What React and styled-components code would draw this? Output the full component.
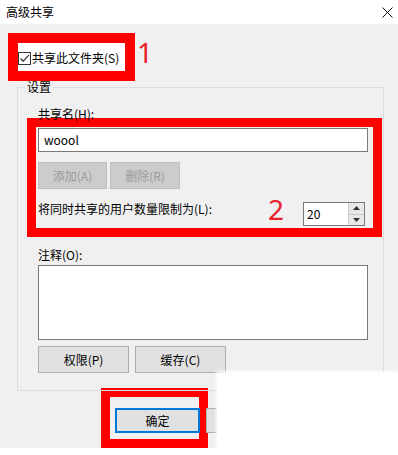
import React from 'react';
import styled, { createGlobalStyle } from 'styled-components';

const GlobalStyle = createGlobalStyle`
  body {
    margin: 0;
    background: #fff;
    font-family: "Noto Sans CJK SC", "Noto Sans", sans-serif;
    font-size: 12px;
    color: #000;
  }
`;

const Window = styled.div`
  position: relative;
  width: 398px;
  height: 455px;
  background: #fff;
  overflow: hidden;
`;

const TitleBar = styled.div`
  height: 24px;
  box-sizing: border-box;
  padding: 0 5px 0 6px;
  display: flex;
  align-items: center;
  justify-content: space-between;
  line-height: 16px;
`;

const Body = styled.div`
  position: relative;
  z-index: 0;
  height: 424px;
  box-sizing: border-box;
  padding-top: 27px;
  background: #f0f0f0;
`;

const CheckRow = styled.label`
  display: flex;
  align-items: center;
  gap: 1px;
  height: 14px;
  padding-left: 18px;
  line-height: 16px;
`;

const CheckBox = styled.span`
  width: 13px;
  height: 13px;
  box-sizing: border-box;
  border: 1px solid #333;
  background: #fff;
  display: flex;
  align-items: center;
  justify-content: center;
`;

const Group = styled.fieldset`
  margin: 14px 14px 0 17px;
  padding: 11px 15px 17px 20px;
  border: 1px solid #dcdcdc;
  min-width: 0;
`;

const Legend = styled.legend`
  padding: 0 2px;
  margin-left: -13px;
  line-height: 16px;
`;

const Label = styled.div`
  line-height: 16px;
  margin-top: ${(p) => p.$top || 0}px;
`;

const TextBox = styled.div`
  box-sizing: border-box;
  height: ${(p) => p.$height}px;
  margin-top: ${(p) => p.$top}px;
  border: 1px solid #7a7a7a;
  background: #fff;
  padding: 2px 5px;
  line-height: 18px;
  font-size: 12px;
`;

const ButtonRow = styled.div`
  display: flex;
  gap: ${(p) => p.$gap}px;
  margin-top: ${(p) => p.$top}px;
`;

const Button = styled.div`
  box-sizing: border-box;
  width: ${(p) => p.$width}px;
  height: ${(p) => p.$height || 27}px;
  display: flex;
  align-items: center;
  justify-content: center;
  border: 1px solid ${(p) => (p.$disabled ? '#bfbfbf' : p.$primary ? '#0078d7' : '#adadad')};
  background: ${(p) => (p.$disabled ? '#cccccc' : '#e1e1e1')};
  color: ${(p) => (p.$disabled ? '#9a9a9a' : '#000')};
  box-shadow: ${(p) => (p.$primary ? 'inset 0 0 0 1px #0078d7' : 'none')};
`;

const LimitRow = styled.div`
  display: flex;
  justify-content: space-between;
  align-items: flex-start;
  margin-top: 12px;
`;

const Spinner = styled.div`
  display: flex;
  width: 62px;
  height: 24px;
  margin-top: 1px;
  margin-right: 3px;
  box-sizing: border-box;
  border: 1px solid #7a7a7a;
  background: #fff;
`;

const SpinValue = styled.div`
  flex: 1;
  padding-left: 3px;
  line-height: 22px;
`;

const SpinButtons = styled.div`
  width: 15px;
  display: flex;
  flex-direction: column;
  border-left: 1px solid #c8c8c8;
`;

const SpinButton = styled.div`
  flex: 1;
  display: flex;
  align-items: center;
  justify-content: center;
  background: #e8e8e8;
  border-bottom: ${(p) => (p.$top ? '1px solid #c8c8c8' : 'none')};
`;

const Footer = styled.div`
  display: flex;
  gap: 6px;
  padding-left: 115px;
  margin-top: 17px;
`;

const Mark = styled.div`
  position: absolute;
  z-index: -1;
  box-sizing: border-box;
  left: ${(p) => p.$x}px;
  top: ${(p) => p.$y}px;
  width: ${(p) => p.$w}px;
  height: ${(p) => p.$h}px;
  border: ${(p) => p.$b}px solid #ff0000;
  background: ${(p) => p.$fill || 'transparent'};
`;

const Number = styled.div`
  position: absolute;
  z-index: 3;
  left: ${(p) => p.$x}px;
  top: ${(p) => p.$y}px;
  font-family: "Noto Sans", sans-serif;
  font-size: 28px;
  line-height: 28px;
  color: #e8202a;
`;

const Patch = styled.div`
  position: absolute;
  z-index: 2;
  left: 217px;
  top: 349px;
  right: 0;
  bottom: 0;
  background: #fff;
  box-shadow: 0 -1px 3px 1px rgba(255, 255, 255, 0.9);
`;

const Arrow = ({ up }) => (
  <svg width="7" height="4" viewBox="0 0 7 4">
    <path d={up ? 'M0 4 L3.5 0 L7 4 Z' : 'M0 0 L3.5 4 L7 0 Z'} fill="#333" />
  </svg>
);

export default function App() {
  return (
    <>
      <GlobalStyle />
      <Window>
        <TitleBar>
          <span>高级共享</span>
          <svg width="11" height="11" viewBox="0 0 11 11">
            <path d="M0.5 0.5 L10.5 10.5 M10.5 0.5 L0.5 10.5" stroke="#111" strokeWidth="1" />
          </svg>
        </TitleBar>
        <Body>
          <Mark $x={8} $y={9} $w={127} $h={48} $b={10} $fill="#fff" />
          <Number $x={137} $y={14}>1</Number>
          <Mark $x={27} $y={94} $w={355} $h={119} $b={9} />
          <Number $x={268} $y={171}>2</Number>
          <Mark $x={101} $y={364} $w={107} $h={60} $b={9} />

          <CheckRow>
            <CheckBox>
              <svg width="11" height="11" viewBox="0 0 11 11">
                <path d="M1.5 5.5 L4.2 8.2 L9.8 2.2" fill="none" stroke="#222" strokeWidth="1.1" />
              </svg>
            </CheckBox>
            共享此文件夹(S)
          </CheckRow>

          <Group>
            <Legend>设置</Legend>
            <Label>共享名(H):</Label>
            <TextBox $height={24} $top={6}>woool</TextBox>
            <ButtonRow $gap={3} $top={10}>
              <Button $width={69} $disabled>添加(A)</Button>
              <Button $width={70} $disabled>删除(R)</Button>
            </ButtonRow>
            <LimitRow>
              <Label>将同时共享的用户数量限制为(L):</Label>
              <Spinner>
                <SpinValue>20</SpinValue>
                <SpinButtons>
                  <SpinButton $top><Arrow up /></SpinButton>
                  <SpinButton><Arrow /></SpinButton>
                </SpinButtons>
              </Spinner>
            </LimitRow>
            <Label $top={21}>注释(O):</Label>
            <TextBox $height={75} $top={2} />
            <ButtonRow $gap={6} $top={6}>
              <Button $width={91}>权限(P)</Button>
              <Button $width={91}>缓存(C)</Button>
            </ButtonRow>
          </Group>

          <Footer>
            <Button $width={85} $height={25} $primary>确定</Button>
            <Button $width={85} $height={25}>取消</Button>
          </Footer>
          <Patch />
        </Body>
      </Window>
    </>
  );
}
